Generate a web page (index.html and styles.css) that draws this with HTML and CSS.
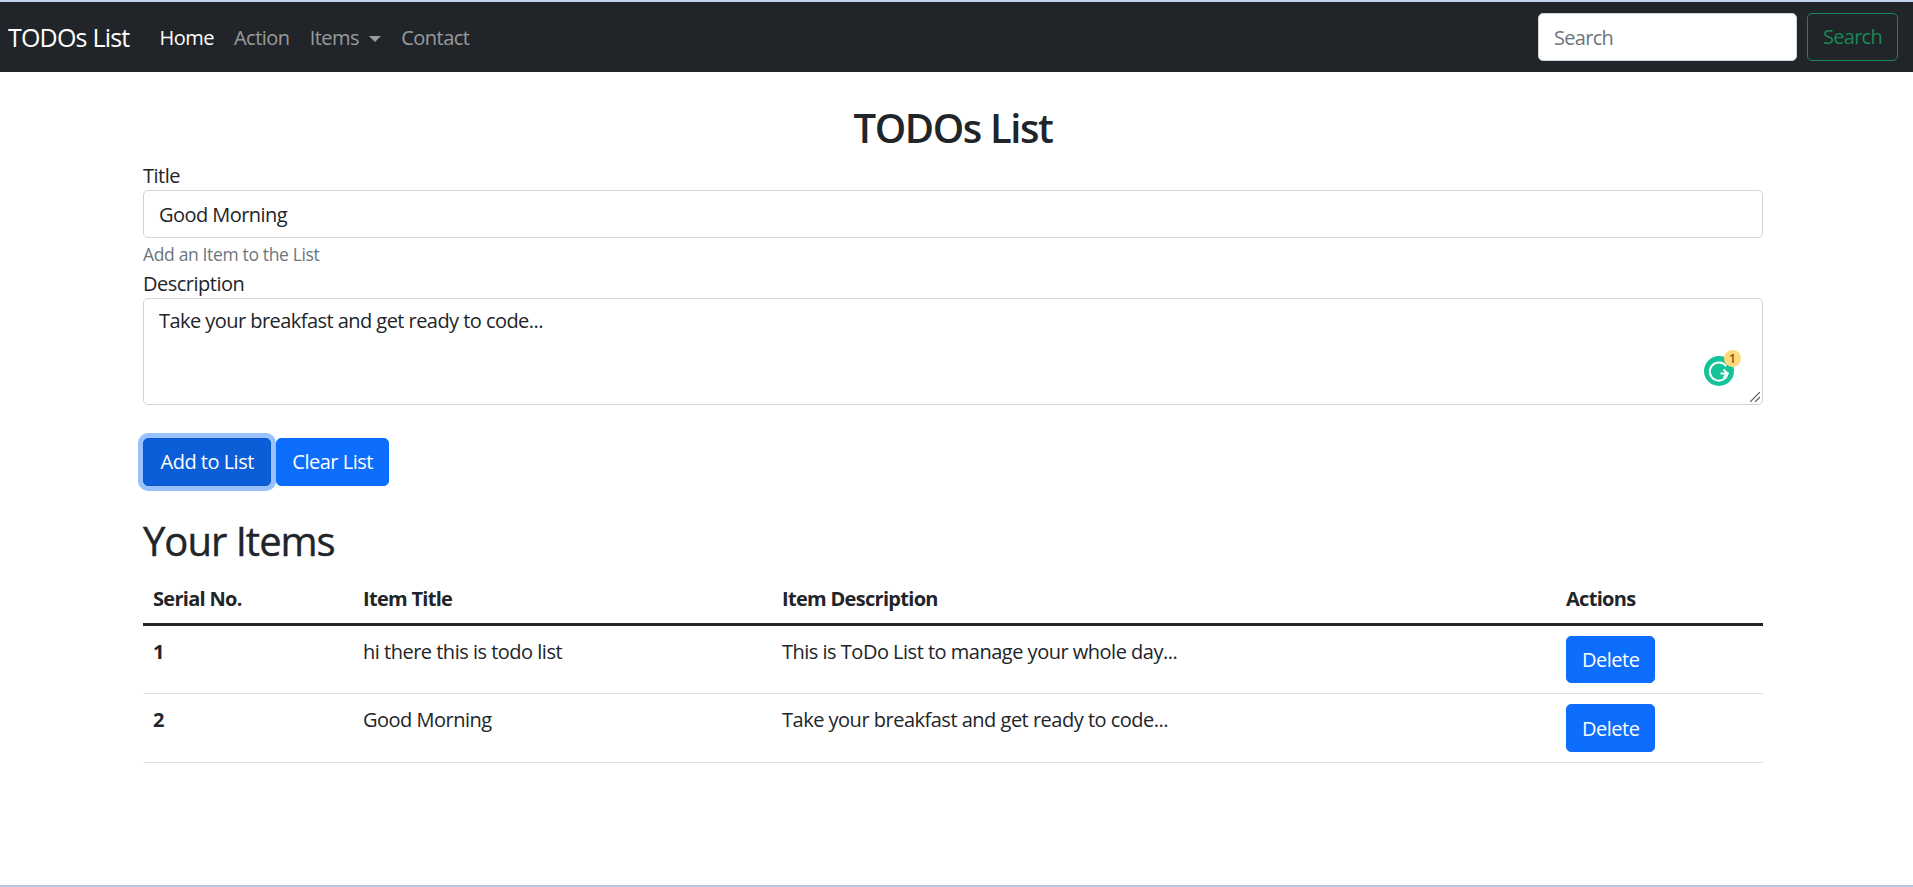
FILE: index.html
```html
<!DOCTYPE html>
<html lang="en">
<head>
    <meta charset="UTF-8">
    <meta name="viewport" content="width=device-width, initial-scale=1.0">
    <title>TODOs List</title>
    <link rel="stylesheet" href="styles.css">
</head>
<body>
<div class="page">
    <nav class="navbar">
        <a class="brand" href="#">TODOs List</a>
        <ul class="nav-links">
            <li><a class="nav-link active" href="#">Home</a></li>
            <li><a class="nav-link" href="#">Action</a></li>
            <li><a class="nav-link dropdown" href="#">Items</a></li>
            <li><a class="nav-link" href="#">Contact</a></li>
        </ul>
        <form class="search-form">
            <input class="search-input" type="search" placeholder="Search">
            <button class="btn-search" type="button">Search</button>
        </form>
    </nav>

    <main class="container">
        <h2 class="page-title">TODOs List</h2>
        <form class="todo-form">
            <label class="form-label" for="title">Title</label>
            <input class="form-control" id="title" type="text" value="Good Morning">
            <div class="form-text">Add an Item to the List</div>

            <label class="form-label" for="description">Description</label>
            <div class="textarea-wrap">
                <textarea class="form-control textarea" id="description">Take your breakfast and get ready to code...</textarea>
                <!-- grammarly widget -->
                <div class="grammarly">
                    <svg width="30" height="30" viewBox="0 0 30 30">
                        <circle cx="15" cy="15" r="15" fill="#15c39a"/>
                        <path d="M22 10.2A9 9 0 1 0 23.6 17.5H16.5" fill="none" stroke="#fff" stroke-width="2"/>
                        <path d="M19.5 13.5L23.6 17.5L19.5 21.5" fill="none" stroke="#fff" stroke-width="2"/>
                    </svg>
                    <span class="grammarly-badge">1</span>
                </div>
                <svg class="resize-handle" width="10" height="10" viewBox="0 0 10 10">
                    <path d="M0 10L10 0M5 10L10 5" fill="none" stroke="#555" stroke-width="1.2"/>
                </svg>
            </div>

            <div class="form-buttons">
                <button class="btn btn-focus" type="button">Add to List</button>
                <button class="btn" type="button">Clear List</button>
            </div>
        </form>

        <h2 class="items-title">Your Items</h2>
        <table class="items-table">
            <thead>
                <tr>
                    <th class="col-serial">Serial No.</th>
                    <th class="col-title">Item Title</th>
                    <th class="col-desc">Item Description</th>
                    <th>Actions</th>
                </tr>
            </thead>
            <tbody>
                <tr>
                    <th>1</th>
                    <td>hi there this is todo list</td>
                    <td>This is ToDo List to manage your whole day...</td>
                    <td><button class="btn" type="button">Delete</button></td>
                </tr>
                <tr>
                    <th>2</th>
                    <td>Good Morning</td>
                    <td>Take your breakfast and get ready to code...</td>
                    <td><button class="btn" type="button">Delete</button></td>
                </tr>
            </tbody>
        </table>
    </main>
</div>
</body>
</html>
```

FILE: styles.css
```css
* {
    box-sizing: border-box;
}

body {
    margin: 0;
    font-family: "Open Sans", "Noto Sans", sans-serif;
    font-size: 20px;
    line-height: 30px;
    color: #212529;
    background-color: #fff;
}

.page {
    height: 887px;
    border-top: 2px solid #c3d0ee;
    border-bottom: 2px solid #b4c6e4;
    overflow: hidden;
}

/* navbar */
.navbar {
    display: flex;
    align-items: center;
    height: 70px;
    padding: 0 15px 0 8px;
    background-color: #212529;
}

.brand {
    margin-right: 20px;
    font-size: 25px;
    letter-spacing: -0.8px;
    color: #fff;
    text-decoration: none;
}

.nav-links {
    display: flex;
    margin: 0;
    padding: 2px 0 0;
    list-style: none;
}

.nav-link {
    display: block;
    padding: 0 10px;
    letter-spacing: -0.5px;
    color: rgba(255, 255, 255, 0.55);
    text-decoration: none;
}

.nav-link.active {
    color: #fff;
}

.dropdown::after {
    content: "";
    display: inline-block;
    margin-left: 10px;
    vertical-align: 3px;
    border-top: 6px solid;
    border-left: 6px solid transparent;
    border-right: 6px solid transparent;
}

.search-form {
    display: flex;
    margin-left: auto;
}

.search-input {
    width: 259px;
    height: 48px;
    margin-right: 10px;
    padding: 0 15px;
    font: inherit;
    letter-spacing: -0.7px;
    border: 1px solid #ced4da;
    border-radius: 5px;
}

.search-input::placeholder {
    color: #6c757d;
}

.btn-search {
    width: 91px;
    height: 48px;
    padding: 0;
    font: inherit;
    letter-spacing: -0.7px;
    color: #198754;
    background: transparent;
    border: 1px solid #198754;
    border-radius: 5px;
}

/* main content */
.container {
    width: 1620px;
    margin-left: 143px;
}

.page-title {
    margin: 0 0 12px;
    padding-top: 32px;
    font-size: 40px;
    line-height: 48px;
    font-weight: 600;
    letter-spacing: -1.4px;
    text-align: center;
}

.form-label {
    display: block;
    height: 26px;
    line-height: 24px;
    letter-spacing: -0.5px;
}

.form-control {
    display: block;
    width: 100%;
    height: 48px;
    padding: 0 15px;
    font: inherit;
    letter-spacing: -0.55px;
    color: #212529;
    border: 1px solid #ced4da;
    border-radius: 5px;
}

.form-text {
    height: 34px;
    padding-top: 3px;
    font-size: 17.5px;
    line-height: 26px;
    letter-spacing: -0.35px;
    color: #6c757d;
}

.textarea-wrap {
    position: relative;
}

.textarea {
    height: 107px;
    padding: 7px 15px;
    resize: none;
}

.resize-handle {
    position: absolute;
    right: 3px;
    bottom: 3px;
}

.grammarly {
    position: absolute;
    right: 29px;
    bottom: 19px;
    width: 30px;
    height: 30px;
}

.grammarly-badge {
    position: absolute;
    top: -6px;
    right: -7px;
    width: 17px;
    height: 17px;
    font-size: 12px;
    font-weight: 600;
    line-height: 17px;
    text-align: center;
    color: #7a5a14;
    background-color: #ffd97a;
    border-radius: 50%;
}

.form-buttons {
    display: flex;
    gap: 5px;
    margin-top: 33px;
}

.btn {
    height: 47.5px;
    padding: 0 15px;
    font: inherit;
    letter-spacing: -0.5px;
    color: #fff;
    background-color: #0d6efd;
    border: 1px solid #0d6efd;
    border-radius: 5px;
}

.btn-focus {
    padding: 0 16.5px;
    background-color: #0b5ed7;
    border-color: #0a58ca;
    box-shadow: 0 0 0 5px rgba(49, 132, 253, 0.5);
}

.items-title {
    margin: 31px 0 0;
    font-size: 40px;
    line-height: 48px;
    font-weight: 500;
    letter-spacing: -1px;
    -webkit-text-stroke: 0.4px;
}

/* table */
.items-table {
    width: 100%;
    margin-top: 8px;
    border-collapse: collapse;
    table-layout: fixed;
}

.col-serial {
    width: 210px;
}

.col-title {
    width: 419px;
}

.col-desc {
    width: 784px;
}

.items-table th,
.items-table td {
    padding: 10px 10px 8px;
    font-weight: 400;
    line-height: 32px;
    text-align: left;
    vertical-align: top;
    letter-spacing: -0.5px;
    border-bottom: 1px solid #dee2e6;
}

.items-table th {
    font-weight: 700;
    letter-spacing: -0.7px;
}

.items-table thead th {
    border-bottom: 3px solid #212529;
}

.items-table .btn {
    display: block;
    margin-bottom: 2px;
    padding-top: 2px;
    padding-right: 14.5px;
    line-height: 30px;
}
```
